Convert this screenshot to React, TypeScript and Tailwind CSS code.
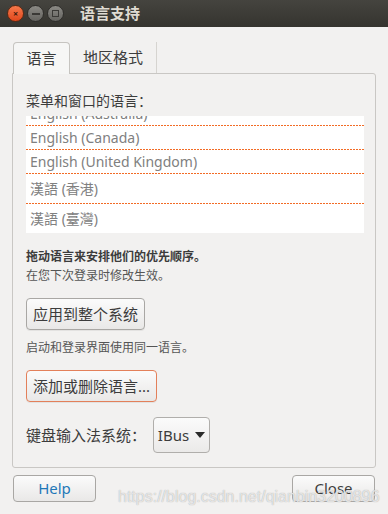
import React from 'react';

const rows = [
  { label: 'English (Australia)', tall: false },
  { label: 'English (Canada)', tall: false },
  { label: 'English (United Kingdom)', tall: false },
  { label: '漢語 (香港)', tall: true },
  { label: '漢語 (臺灣)', tall: true },
];

function TitleBar() {
  return (
    <div className="flex h-[27px] items-center bg-gradient-to-b from-[#45443f] to-[#35342f] pl-[7px]">
      <div className="flex items-center gap-[3px]">
        <div className="flex h-[17px] w-[17px] items-center justify-center rounded-full border border-[#5a2a14] bg-gradient-to-b from-[#f5784a] to-[#e0461a] text-[9px] font-bold leading-none text-[#3a1a0c]">
          ×
        </div>
        <div className="flex h-[17px] w-[17px] items-center justify-center rounded-full border border-[#2f2e2b] bg-gradient-to-b from-[#8b8a85] to-[#64635f]">
          <div className="h-[2px] w-[8px] bg-[#3a3936]" />
        </div>
        <div className="flex h-[17px] w-[17px] items-center justify-center rounded-full border border-[#2f2e2b] bg-gradient-to-b from-[#8b8a85] to-[#64635f]">
          <div className="h-[7px] w-[7px] border-[1.5px] border-[#3a3936]" />
        </div>
      </div>
      <div className="ml-[16px] text-[15px] font-bold text-[#dfdbd2]">语言支持</div>
    </div>
  );
}

function Button({ children, accent }: { children: React.ReactNode; accent?: boolean }) {
  return (
    <div
      className={`inline-flex h-[32px] items-center rounded-[4px] border bg-gradient-to-b from-[#fbfbfb] to-[#e9e8e7] px-[6px] text-[15px] text-[#3c3c3c] shadow-[0_1px_0_rgba(0,0,0,0.06)] ${
        accent ? 'border-[#e3805a]' : 'border-[#a9a7a4]'
      }`}
    >
      {children}
    </div>
  );
}

function Separator() {
  return (
    <svg className="block" width="338" height="1" viewBox="0 0 338 1">
      <line x1="0" y1="0.5" x2="338" y2="0.5" stroke="#f26b25" strokeWidth="1" strokeDasharray="2 1" />
    </svg>
  );
}

export default function App() {
  return (
    <div
      className="relative h-[514px] w-[388px] overflow-hidden bg-[#f2f1f0] text-[#3c3c3c]"
      style={{ fontFamily: '"Noto Sans", "Noto Sans CJK SC", sans-serif' }}
    >
      <TitleBar />

      <div className="px-[12px] pt-[14px]">
        {/* tabs */}
        <div className="flex h-[32px] items-end pl-[1px]">
          <div className="relative z-10 -mb-px flex h-[32px] w-[57px] items-center justify-center rounded-t-[4px] border border-b-0 border-[#c6c4c0] bg-[#f6f6f5] text-[15px]">
            语言
          </div>
          <div className="flex h-[31px] items-center border-r border-[#d6d4d0] px-[13px] text-[15px]">
            地区格式
          </div>
        </div>

        {/* panel */}
        <div className="h-[395px] rounded-b-[3px] rounded-tr-[3px] border border-[#c9c7c4] px-[13px] pt-[16px]">
          <div className="text-[14px] leading-[22px]">菜单和窗口的语言：</div>

          <div className="mt-[4px] h-[117px] w-[338px] overflow-hidden bg-white">
            <div className="-mt-[14px]">
              {rows.map((r, i) => (
                <div key={r.label}>
                  <div
                    className={`flex items-center pl-[4px] text-[14px] text-[#808080] ${
                      r.tall ? 'h-[29px]' : 'h-[23px]'
                    }`}
                  >
                    {r.label}
                  </div>
                  {i < rows.length - 1 ? <Separator /> : null}
                </div>
              ))}
            </div>
          </div>

          <div className="mt-[15px] text-[12px] font-bold leading-[18px]">拖动语言来安排他们的优先顺序。</div>
          <div className="text-[12px] leading-[20px] text-[#555]">在您下次登录时修改生效。</div>

          <div className="mt-[12px]">
            <Button>应用到整个系统</Button>
          </div>

          <div className="mt-[9px] text-[12px] leading-[18px] text-[#555]">启动和登录界面使用同一语言。</div>

          <div className="mt-[13px]">
            <Button accent>添加或删除语言...</Button>
          </div>

          <div className="mt-[15px] flex items-center">
            <div className="w-[127px] text-[15px]">键盘输入法系统：</div>
            <div className="flex h-[36px] w-[57px] items-center justify-center gap-[6px] rounded-[4px] border border-[#b0aeab] bg-gradient-to-b from-[#fbfbfb] to-[#ebeae9] text-[15px]">
              <span>IBus</span>
              <svg width="10" height="6" viewBox="0 0 10 6">
                <path d="M0 0 L10 0 L5 6 Z" fill="#2b2b2b" />
              </svg>
            </div>
          </div>
        </div>

        {/* bottom buttons */}
        <div className="mt-[7px] flex justify-between pl-[1px] pr-[1px]">
          <div className="flex h-[27px] w-[83px] items-center justify-center rounded-[4px] border border-[#a9a7a4] bg-gradient-to-b from-[#fbfbfb] to-[#e9e8e7] text-[15px] text-[#1f78b8]">
            Help
          </div>
          <div className="flex h-[27px] w-[83px] items-center justify-center rounded-[4px] border border-[#a9a7a4] bg-gradient-to-b from-[#fbfbfb] to-[#e9e8e7] text-[15px]">
            Close
          </div>
        </div>
      </div>

      {/* watermark */}
      <div className="pointer-events-none absolute left-[118px] top-[485px] font-['Liberation_Sans',sans-serif] text-[16px] leading-[24px] text-white/70 [text-shadow:0_0_1px_#9a9a9a]">
        https://blog.csdn.net/qianbin3200896
      </div>
    </div>
  );
}
